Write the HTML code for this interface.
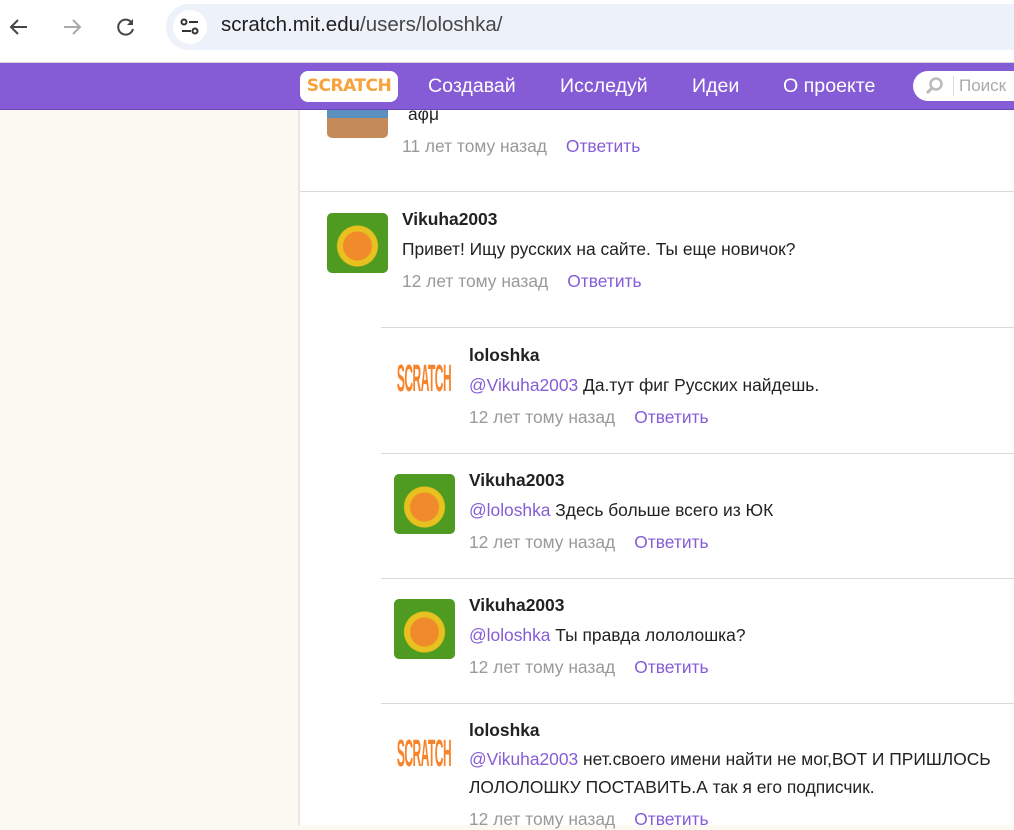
<!DOCTYPE html>
<html><head><meta charset="utf-8"><style>
*{margin:0;padding:0;box-sizing:border-box}
body{width:1014px;height:825px;overflow:hidden;font-family:"Liberation Sans",Arial,sans-serif;background:#fbf9f2;position:relative}
.chrome{position:absolute;left:0;top:0;width:1014px;height:63px;background:#fff;border-bottom:1px solid #d6d6d6}
.addr{position:absolute;left:166px;top:4px;width:870px;height:46px;border-radius:23px;background:#edf1fa}
.tune{position:absolute;left:173px;top:10px;width:34px;height:34px;border-radius:17px;background:#fff}
.url{position:absolute;left:221px;top:13px;font-size:20.5px;color:#1f1f1f}
.url span{color:#474747}
.nav{position:absolute;left:0;top:63px;width:1014px;height:47px;background:#855cd6;border-bottom:1px solid #6b48b8}
.nav a{position:absolute;top:12px;color:#fff;font-size:19.6px}
.logo{position:absolute;left:300px;top:71px;width:98px;height:31px;background:#fff;border-radius:8px;color:#f7a33a;font-family:"DejaVu Sans",sans-serif;font-weight:bold;font-size:17px;letter-spacing:-0.5px;text-align:center;line-height:31px}
.search{position:absolute;left:913px;top:71px;width:120px;height:30px;background:#fff;border-radius:15px 0 0 15px}
.search span{position:absolute;left:40px;top:5px;font-size:17px;color:#aaa;border-left:1px solid #ddd;padding-left:5px}
.main{position:absolute;left:298px;top:110px;width:716px;height:715px;background:#fff;border-left:2px solid #e8e6df}
.c{position:absolute;font-size:17.4px;color:#222}
.n{font-weight:bold}
.t{color:#999}
.l{color:#855cd6}
.sep{position:absolute;height:1px;background:#d9d9d9;right:0}
.av{position:absolute;width:61px;height:60px;border-radius:5px;background:radial-gradient(circle at 50% 55%,#f08a2a 0 14px,#e8c020 15px 20px,#4f9a20 21px)}
.sc{position:absolute;width:60px;height:60px;overflow:hidden}
.sc div{position:absolute;left:0;top:20px;width:60px;height:16px;color:#f7832a;font-weight:bold;font-size:12px;font-family:"Liberation Sans Narrow","Liberation Sans",sans-serif;transform:scaleY(3.2);text-align:center;line-height:16px;letter-spacing:-0.5px}
</style></head><body>
<div class="chrome">
<svg style="position:absolute;left:8px;top:16px" width="22" height="22" viewBox="0 0 22 22"><path d="M19 11H4M10 4l-7 7 7 7" stroke="#444" stroke-width="2" fill="none"/></svg>
<svg style="position:absolute;left:61px;top:16px" width="22" height="22" viewBox="0 0 22 22"><path d="M3 11h15M12 4l7 7-7 7" stroke="#aaa" stroke-width="2" fill="none"/></svg>
<svg style="position:absolute;left:115px;top:16px" width="22" height="22" viewBox="0 0 22 22"><path d="M17 7A7.5 7.5 0 1 0 18 13" stroke="#444" stroke-width="2" fill="none"/><path d="M18 3v6h-6" fill="#444"/></svg>
<div class="addr"></div><div class="tune"></div>
<svg style="position:absolute;left:180px;top:17px" width="20" height="20" viewBox="0 0 20 20"><circle cx="4" cy="5" r="2.5" stroke="#333" stroke-width="2" fill="none"/><path d="M9 5h9M2 14h9" stroke="#333" stroke-width="2"/><circle cx="15" cy="14" r="2.5" stroke="#333" stroke-width="2" fill="none"/></svg>
<div class="url">scratch.mit.edu<span>/users/loloshka/</span></div>
</div>
<div class="nav">
<a style="left:428px">Создавай</a><a style="left:560px">Исследуй</a><a style="left:692px">Идеи</a><a style="left:783px">О проекте</a>
</div>
<div class="logo">SCRATCH</div>
<div class="search"><svg style="position:absolute;left:12px;top:5px" width="20" height="20" viewBox="0 0 20 20"><circle cx="11" cy="8" r="5.5" stroke="#bbb" stroke-width="2.5" fill="none"/><path d="M7 12l-5 5" stroke="#bbb" stroke-width="3"/></svg><span>Поиск</span></div>
<div class="main"></div>
<div style="position:absolute;left:327px;top:110px;width:61px;height:28px;background:linear-gradient(#5a8fc0 0 8px,#c58a5a 8px);border-radius:0 0 5px 5px;overflow:hidden"></div>
<div class="c" style="left:408px;top:104px">аφμ</div>
<div class="c t" style="left:402px;top:136px">11 лет тому назад<span class="l" style="margin-left:19px">Ответить</span></div>
<div class="sep" style="left:300px;top:191px"></div>
<div class="av" style="left:327px;top:213px"></div>
<div class="c n" style="left:402px;top:209px">Vikuha2003</div>
<div class="c" style="left:402px;top:239px">Привет! Ищу русских на сайте. Ты еще новичок?</div>
<div class="c t" style="left:402px;top:271px">12 лет тому назад<span class="l" style="margin-left:19px">Ответить</span></div>

<div class="sep" style="left:381px;top:327px"></div>
<div class="sc" style="left:394px;top:350px"><div>SCRATCH</div></div>
<div class="c n" style="left:469px;top:345px">loloshka</div>
<div class="c" style="left:469px;top:375px"><span class="l">@Vikuha2003</span> Да.тут фиг Русских найдешь.</div>
<div class="c t" style="left:469px;top:407px">12 лет тому назад<span class="l" style="margin-left:19px">Ответить</span></div>

<div class="sep" style="left:381px;top:453px"></div>
<div class="av" style="left:394px;top:474px"></div>
<div class="c n" style="left:469px;top:470px">Vikuha2003</div>
<div class="c" style="left:469px;top:500px"><span class="l">@loloshka</span> Здесь больше всего из ЮК</div>
<div class="c t" style="left:469px;top:532px">12 лет тому назад<span class="l" style="margin-left:19px">Ответить</span></div>

<div class="sep" style="left:381px;top:578px"></div>
<div class="av" style="left:394px;top:599px"></div>
<div class="c n" style="left:469px;top:595px">Vikuha2003</div>
<div class="c" style="left:469px;top:625px"><span class="l">@loloshka</span> Ты правда лололошка?</div>
<div class="c t" style="left:469px;top:657px">12 лет тому назад<span class="l" style="margin-left:19px">Ответить</span></div>

<div class="sep" style="left:381px;top:703px"></div>
<div class="sc" style="left:394px;top:725px"><div>SCRATCH</div></div>
<div class="c n" style="left:469px;top:720px">loloshka</div>
<div class="c" style="left:469px;top:745px;width:545px;line-height:28px"><span class="l">@Vikuha2003</span> нет.своего имени найти не мог,ВОТ И ПРИШЛОСЬ ЛОЛОЛОШКУ ПОСТАВИТЬ.А так я его подписчик.</div>
<div class="c t" style="left:469px;top:809px">12 лет тому назад<span class="l" style="margin-left:19px">Ответить</span></div>
</body></html>
